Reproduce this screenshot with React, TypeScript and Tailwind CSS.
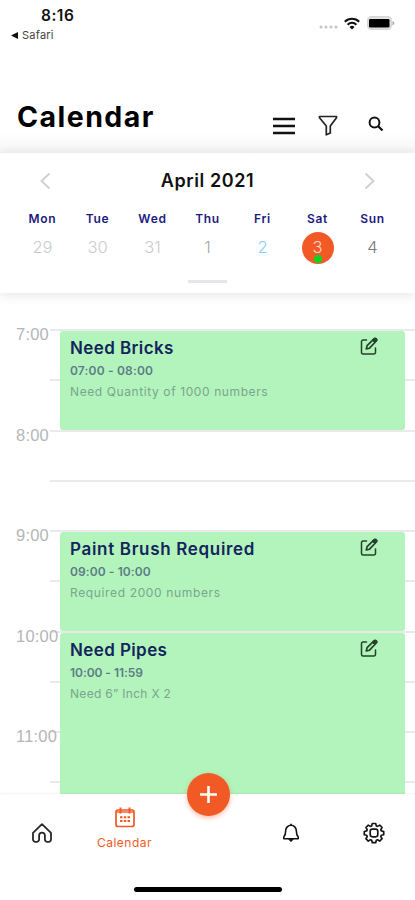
import type { ReactNode } from "react";

const days = [
  { name: "Mon", date: "29", color: "text-[#c9cbce]" },
  { name: "Tue", date: "30", color: "text-[#c9cbce]" },
  { name: "Wed", date: "31", color: "text-[#c9cbce]" },
  { name: "Thu", date: "1", color: "text-[#a5a7aa]" },
  { name: "Fri", date: "2", color: "text-[#7fd0f7]" },
  { name: "Sat", date: "3", color: "text-[#ffd9cb]", selected: true },
  { name: "Sun", date: "4", color: "text-[#77797c]" },
];

// One grid row per half hour, starting at 7:00
const hours = [
  { label: "7:00", place: "row-start-1" },
  { label: "8:00", place: "row-start-3" },
  { label: "9:00", place: "row-start-5" },
  { label: "10:00", place: "row-start-7" },
  { label: "11:00", place: "row-start-9" },
];

const lines = [
  "row-start-1",
  "row-start-2",
  "row-start-3",
  "row-start-4",
  "row-start-5",
  "row-start-6",
  "row-start-7",
  "row-start-8",
  "row-start-9",
  "row-start-10",
];

const events = [
  {
    title: "Need Bricks",
    time: "07:00 - 08:00",
    note: "Need Quantity of 1000 numbers",
    place: "row-start-1 row-end-3",
    titleTrack: "tracking-[0.4px]",
    timeTrack: "tracking-[0.18px]",
    noteTrack: "tracking-[0.6px]",
  },
  {
    title: "Paint Brush Required",
    time: "09:00 - 10:00",
    note: "Required 2000 numbers",
    place: "row-start-5 row-end-7",
    titleTrack: "tracking-[0.68px]",
    timeTrack: "tracking-[0.1px]",
    noteTrack: "tracking-[0.64px]",
  },
  {
    title: "Need Pipes",
    time: "10:00 - 11:59",
    note: "Need 6” Inch X 2",
    place: "row-start-7 row-end-12",
    titleTrack: "tracking-[0.4px]",
    timeTrack: "tracking-[-0.05px]",
    noteTrack: "tracking-[0.3px]",
  },
];

function EditIcon() {
  return (
    <svg width="18" height="19" viewBox="0 0 18 19" fill="none" stroke="#24422b" strokeWidth="1.5" strokeLinecap="round" strokeLinejoin="round">
      <path d="M6.500 3H3A1.500 1.500 0 0 0 1.500 4.500V15.500A1.500 1.500 0 0 0 3 17H14A1.500 1.500 0 0 0 15.500 15.500V11" />
      <path d="M6.300 12l.8-3.300L14 1.800a1.500 1.500 0 0 1 2.300 2.200L9.500 11.200z" strokeWidth="1.700" />
      <path d="M12.300 3.300l2.400 2.400L16.500 3.500 15 1.500z" fill="#24422b" strokeWidth="1" />
    </svg>
  );
}

function StatusBar() {
  return (
    <div className="flex h-[46px] justify-between">
      <div className="pl-[11px] pt-[7px]">
        <p className="pl-[30px] text-[15.500px] leading-[18px] font-semibold tracking-[0.5px] text-[#111]">8:16</p>
        <p className="mt-[3px] flex items-center gap-[4px] text-[11px] leading-[14px] tracking-[0.25px] text-[#444]">
          <svg width="7" height="7" viewBox="0 0 7 7">
            <path d="M0 3.500L7 0v7z" fill="#111" />
          </svg>
          Safari
        </p>
      </div>
      <div className="flex h-[16px] items-center pr-[20px] mt-[15px]">
        <svg width="19" height="4" viewBox="0 0 19 4" fill="#c4c4c4" className="mt-[8px] mr-[6px]">
          <circle cx="2" cy="2" r="1.500" />
          <circle cx="7" cy="2" r="1.500" />
          <circle cx="12" cy="2" r="1.500" />
          <circle cx="17" cy="2" r="1.500" />
        </svg>
        <svg width="16" height="13" viewBox="0 0 16 13" fill="none" stroke="#111" strokeWidth="2" className="mr-[7px]">
          <path d="M.8 4.700a10.200 10.200 0 0 1 14.400 0" />
          <path d="M3.600 7.700a6.200 6.200 0 0 1 8.800 0" />
          <path d="M5.500 10L8 12.500l2.500-2.500a3.500 3.500 0 0 0-5 0z" fill="#111" stroke="none" />
        </svg>
        <svg width="28" height="14" viewBox="0 0 28 14">
          <rect x=".7" y=".7" width="23.600" height="12.600" rx="3.500" fill="#e4e4e4" stroke="#d6d6d6" strokeWidth="1.400" />
          <rect x="2" y="3" width="20.500" height="8.500" rx="1.200" fill="#000" />
          <path d="M25.500 5v4.500c1.300-.5 1.800-1.300 1.800-2.250S26.800 5.500 25.500 5z" fill="#aaa" />
        </svg>
      </div>
    </div>
  );
}

function Header() {
  return (
    <div className="flex h-[107px] justify-between bg-linear-to-b from-white from-80% to-[#f7f7f8] pl-[17px] pr-[30px]">
      <h1 className="mt-[53px] text-[28.500px] leading-[36px] font-bold tracking-[1.450px] text-black">Calendar</h1>
      <div className="mt-[66px] flex items-center gap-[23px] h-[26px]">
        <svg width="22" height="18" viewBox="0 0 22 18" className="mt-[2px]">
          <path d="M0 2h22M0 9h22M0 16h22" stroke="#111" strokeWidth="2.600" />
        </svg>
        <svg width="20" height="21" viewBox="0 0 20 21" fill="none" stroke="#222" strokeWidth="1.700" strokeLinejoin="round">
          <path d="M1.500 1.500h17v1.300L12.300 11v7l-4 1.800V11L1.500 2.800z" />
        </svg>
        <svg width="16" height="16" viewBox="0 0 16 16" fill="none" stroke="#111" strokeWidth="2" className="-mt-[3px] ml-[7px] mr-[1px]">
          <circle cx="6.500" cy="6.500" r="4.900" />
          <path d="M10 10l4.500 4.500" strokeWidth="2.300" />
        </svg>
      </div>
    </div>
  );
}

function WeekPanel() {
  return (
    <section className="z-10 h-[140px] bg-white shadow-[0_1px_12px_rgba(0,0,0,0.12)]">
      <div className="flex h-[55px] items-center justify-between pl-[39px] pr-[39px]">
        <svg width="12" height="18" viewBox="0 0 12 18" fill="none" stroke="#cfd1d4" strokeWidth="2">
          <path d="M10.500 1.500L2.500 9l8 7.500" />
        </svg>
        <h2 className="text-[18px] font-semibold tracking-[0.6px] text-[#111]">April 2021</h2>
        <svg width="12" height="18" viewBox="0 0 12 18" fill="none" stroke="#cfd1d4" strokeWidth="2">
          <path d="M1.500 1.500L9.500 9l-8 7.500" />
        </svg>
      </div>
      <div className="grid grid-cols-7 px-[15px]">
        {days.map((day) => (
          <div key={day.name} className="flex flex-col items-center pt-[1px]">
            <span className="text-[12px] leading-[20px] font-semibold tracking-[0.7px] text-[#1c1a80]">{day.name}</span>
            <span
              className={`relative mt-[3px] flex size-[32px] items-center justify-center rounded-full text-[16.500px] font-light ${day.color} ${day.selected ? "bg-[#f15a24]" : ""}`}
            >
              <span className="-mt-[2px]">{day.date}</span>
              {day.selected && <span className="absolute bottom-[1px] left-[12px] size-[8px] rounded-full bg-[#0fd324]" />}
            </span>
          </div>
        ))}
      </div>
      <div className="mx-auto mt-[16px] h-[3px] w-[39px] bg-[#e4e6e9]" />
    </section>
  );
}

function Timeline() {
  return (
    <section className="h-[501px] overflow-hidden pt-[37px]">
      <div className="grid grid-cols-[16px_34px_10px_345px_10px] auto-rows-[50.25px]">
        {lines.map((line) => (
          <div key={line} className={`col-start-3 col-end-6 -mt-[1px] h-[2px] bg-[#e9eaec] ${line}`} />
        ))}
        {hours.map((hour) => (
          <span
            key={hour.label}
            className={`z-10 col-start-2 -mt-[6px] h-[20px] font-['Liberation_Sans',Arial,sans-serif] text-[16.500px] leading-[20px] tracking-[0.2px] text-[#b4b6b8] ${hour.place}`}
          >
            {hour.label}
          </span>
        ))}
        {events.map((event) => (
          <article
            key={event.title}
            className={`col-start-4 mt-[1px] mb-[1px] flex justify-between rounded-[3px] bg-[#b2f4bb] pl-[10px] pr-[27px] ${event.place}`}
          >
            <div className="pt-[6px] whitespace-nowrap">
              <h3 className={`text-[17px] leading-[22px] font-semibold text-[#14245c] ${event.titleTrack}`}>{event.title}</h3>
              <p className={`mt-[3px] text-[12px] leading-[18px] font-semibold text-[#5d7c86] ${event.timeTrack}`}>{event.time}</p>
              <p className={`mt-[3px] text-[12px] leading-[18px] text-[#7ba58f] ${event.noteTrack}`}>{event.note}</p>
            </div>
            <div className="pt-[6px]">
              <EditIcon />
            </div>
          </article>
        ))}
      </div>
    </section>
  );
}

function NavItem({ children }: { children: ReactNode }) {
  return <div className="flex h-[78px] w-[83px] items-center justify-center">{children}</div>;
}

function BottomNav() {
  return (
    <nav className="relative z-10 h-[106px] bg-white shadow-[0_-1px_2px_rgba(0,0,0,0.05)]">
      <div className="flex">
        <NavItem>
          <svg width="20" height="20" viewBox="0 0 20 20" fill="none" stroke="#26282b" strokeWidth="1.800" strokeLinejoin="round">
            <path d="M1 9.800L10 1.200l9 8.600v6.700a2.400 2.400 0 0 1-2.400 2.400h-1.300a2.400 2.400 0 0 1-2.400-2.400v-4a2.900 2.900 0 0 0-5.800 0v4a2.400 2.400 0 0 1-2.400 2.400H3.400A2.400 2.400 0 0 1 1 16.500z" />
          </svg>
        </NavItem>
        <div className="flex w-[83px] flex-col items-center pt-[13px]">
          <svg width="20" height="21" viewBox="0 0 20 21" fill="none" stroke="#f15a24" strokeWidth="1.700">
            <rect x="1" y="3" width="18" height="16.500" rx="2" />
            <path d="M1.500 5h17" strokeWidth="1.400" />
            <path d="M5.500 .5v6M14.500 .5v6" strokeWidth="2" />
            <path d="M5 10.200h2.500M8.800 10.200h2.500M12.500 10.200H15M5 14h2.500M8.800 14h2.500M12.500 14H15" strokeWidth="2" />
          </svg>
          <span className="mt-[6px] text-[12px] leading-[18px] tracking-[0.5px] text-[#f15a24]">Calendar</span>
        </div>
        <div className="w-[83px]" />
        <NavItem>
          <svg width="18" height="20" viewBox="0 0 18 20" fill="none" stroke="#111" strokeWidth="1.600" strokeLinejoin="round">
            <path d="M9 2.300a5.300 5.300 0 0 0-5.300 5.300c0 3.300-.4 4.700-1.900 6.400v1.800h14.400V14c-1.500-1.700-1.900-3.100-1.900-6.400A5.300 5.300 0 0 0 9 2.300z" />
            <path d="M9 .7v1.600" />
            <path d="M6.800 16.300h4.400L9 18.700z" fill="#111" strokeWidth=".8" />
          </svg>
        </NavItem>
        <NavItem>
          <svg width="22" height="22" viewBox="0 0 22 22" fill="none" stroke="#161616" strokeWidth="1.700" strokeLinejoin="round">
            <path d="M9.300 1.500h3.400l.6 2.400 1.300.5 2.100-1.300 2.400 2.400-1.300 2.100.5 1.300 2.400.6v3.200l-2.400.6-.5 1.300 1.300 2.100-2.400 2.400-2.100-1.300-1.300.5-.6 2.400H9.300l-.6-2.400-1.300-.5-2.100 1.300-2.400-2.400 1.300-2.100-.5-1.300-2.400-.6V9.500l2.400-.6.5-1.300-1.300-2.100 2.400-2.400 2.100 1.300 1.300-.5z" />
            <rect x="7.200" y="7.200" width="7.600" height="7.600" rx="2.200" />
          </svg>
        </NavItem>
      </div>
      <button className="absolute -top-[21px] left-[186.500px] flex size-[43px] items-center justify-center rounded-full bg-[#f15a24] shadow-[0_2px_5px_rgba(241,90,36,0.4)]">
        <svg width="17" height="17" viewBox="0 0 17 17" stroke="#fff" strokeWidth="2.600">
          <path d="M8.500 0v17M0 8.500h17" />
        </svg>
      </button>
      <div className="mx-auto mt-[15px] h-[5px] w-[148px] rounded-full bg-black" />
    </nav>
  );
}

export default function App() {
  return (
    <div className="flex h-[900px] w-[415px] flex-col overflow-hidden bg-white font-[Inter,sans-serif]">
      <StatusBar />
      <Header />
      <WeekPanel />
      <Timeline />
      <BottomNav />
    </div>
  );
}
